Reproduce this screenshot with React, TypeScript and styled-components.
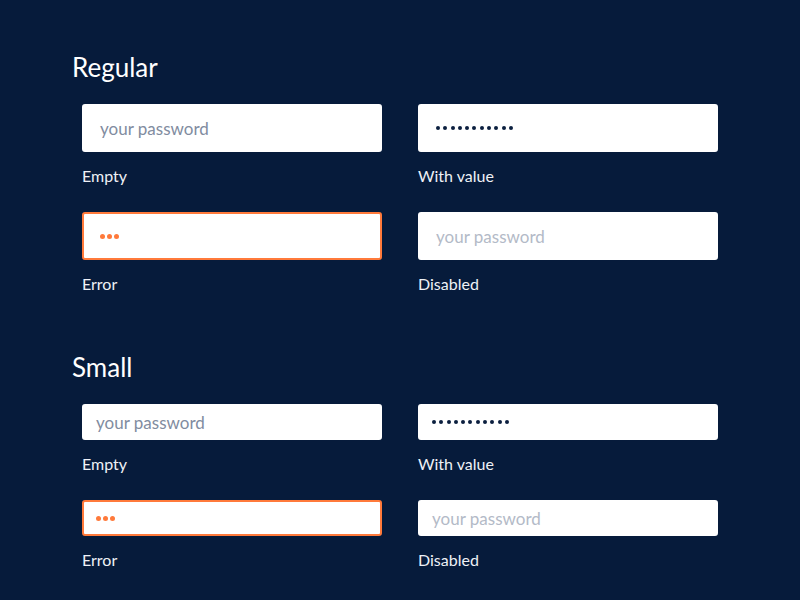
import styled, { createGlobalStyle } from "styled-components";

type Size = "regular" | "small";
type State = "empty" | "value" | "error" | "disabled";

const GlobalStyle = createGlobalStyle`
  body {
    margin: 0;
    background: #061b3b;
    font-family: "Lato", "Noto Sans", sans-serif;
  }
`;

const Page = styled.div`
  min-height: 600px;
  padding: 52px 0 0 72px;
  box-sizing: border-box;
  background: #061b3b;
  color: #ffffff;
`;

const Section = styled.section`
  & + & {
    margin-top: 56px;
  }
`;

const Heading = styled.h2`
  margin: 0 0 22px;
  font-size: 26px;
  line-height: 30px;
  font-weight: 400;
  color: #ffffff;
`;

const Grid = styled.div`
  display: grid;
  grid-template-columns: 300px 300px;
  column-gap: 36px;
  row-gap: 24px;
  margin-left: 10px;
`;

const Field = styled.div`
  display: flex;
  flex-direction: column;
`;

const Box = styled.div<{ $size: Size; $state: State }>`
  display: flex;
  align-items: center;
  box-sizing: border-box;
  height: ${(p) => (p.$size === "regular" ? "48px" : "36px")};
  padding: 0 ${(p) => (p.$size === "regular" ? "16px" : "12px")};
  background: #ffffff;
  border-radius: 3px;
  border: 2px solid ${(p) => (p.$state === "error" ? "#ff7a3b" : "#ffffff")};
`;

const Placeholder = styled.span<{ $disabled?: boolean }>`
  font-size: 17px;
  color: ${(p) => (p.$disabled ? "#b3bac7" : "#818ca0")};
`;

const Dots = styled.div<{ $error?: boolean }>`
  display: flex;
  align-items: center;
  gap: ${(p) => (p.$error ? "2px" : "3.3px")};
`;

const Dot = styled.span<{ $error?: boolean }>`
  width: ${(p) => (p.$error ? "5px" : "4px")};
  height: ${(p) => (p.$error ? "5px" : "4px")};
  border-radius: 50%;
  background: ${(p) => (p.$error ? "#ff7a3b" : "#0b1f3f")};
`;

const Label = styled.div`
  margin-top: 12px;
  font-size: 16px;
  line-height: 24px;
  color: #eef1f6;
`;

const fields: { state: State; label: string }[] = [
  { state: "empty", label: "Empty" },
  { state: "value", label: "With value" },
  { state: "error", label: "Error" },
  { state: "disabled", label: "Disabled" },
];

const Input = ({ size, state }: { size: Size; state: State }) => {
  const count = state === "value" ? 11 : 3;
  const error = state === "error";
  return (
    <Box $size={size} $state={state}>
      {state === "empty" || state === "disabled" ? (
        <Placeholder $disabled={state === "disabled"}>your password</Placeholder>
      ) : (
        <Dots $error={error}>
          {Array.from({ length: count }).map((_, i) => (
            <Dot key={i} $error={error} />
          ))}
        </Dots>
      )}
    </Box>
  );
};

const Group = ({ title, size }: { title: string; size: Size }) => (
  <Section>
    <Heading>{title}</Heading>
    <Grid>
      {fields.map((f) => (
        <Field key={f.state}>
          <Input size={size} state={f.state} />
          <Label>{f.label}</Label>
        </Field>
      ))}
    </Grid>
  </Section>
);

const App = () => (
  <>
    <GlobalStyle />
    <Page>
      <Group title="Regular" size="regular" />
      <Group title="Small" size="small" />
    </Page>
  </>
);

export default App;
